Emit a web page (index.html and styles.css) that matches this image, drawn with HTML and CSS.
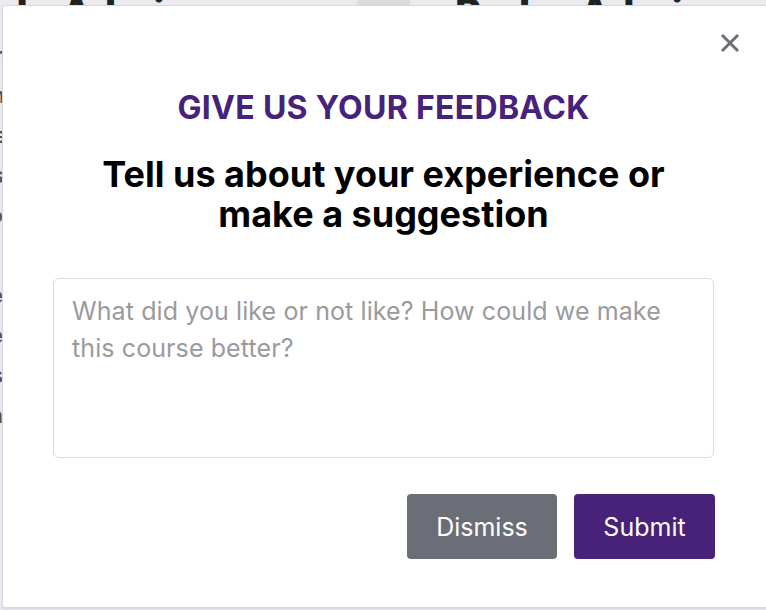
FILE: index.html
```html
<!DOCTYPE html>
<html lang="en">
<head>
<meta charset="utf-8">
<title>Feedback</title>
<link rel="stylesheet" href="styles.css">
</head>
<body>
<div class="page">
  <div class="bg-head">
    <h2 class="bg-name bg-name-left">Fernando Admin</h2>
    <div class="bg-chip"></div>
    <h2 class="bg-name bg-name-right">Pedro Admin</h2>
  </div>
  <div class="bg-lines">
    <p>Lorem ipsum</p>
    <p>Trainee</p>
    <p>Course</p>
    <p>Info</p>
    <p>&nbsp;</p>
    <p>Zone</p>
    <p>Mode</p>
    <p>Class</p>
    <p>Main</p>
  </div>
</div>

<div class="modal" role="dialog" aria-labelledby="fb-title">
  <button class="close" aria-label="Close">
    <svg viewBox="0 0 20 20" width="20" height="20"><path d="M2 2 L18 18 M18 2 L2 18" stroke="currentColor" stroke-width="3" fill="none"/></svg>
  </button>
  <div class="modal-body">
    <h1 class="eyebrow" id="fb-title">GIVE US YOUR FEEDBACK</h1>
    <h2 class="headline">Tell us about your experience or<br>make a suggestion</h2>
    <textarea class="field" placeholder="What did you like or not like? How could we make this course better?"></textarea>
    <div class="actions">
      <button class="btn btn-dismiss">Dismiss</button>
      <button class="btn btn-submit">Submit</button>
    </div>
  </div>
</div>
</body>
</html>
```

FILE: styles.css
```css
* { box-sizing: border-box; }

html, body {
  margin: 0;
  padding: 0;
  height: 100%;
  overflow: hidden;
}

body {
  background: #eaeaef;
  font-family: Inter, "Liberation Sans", sans-serif;
  position: relative;
}

.page {
  height: 100%;
}

.bg-head {
  display: flex;
  align-items: flex-end;
  height: 5px;
  overflow: hidden;
}

.bg-name {
  margin: 0;
  font-size: 40px;
  font-weight: 800;
  line-height: 1;
  color: #222;
  white-space: nowrap;
  flex: none;
  transform: translateY(28px);
  overflow: hidden;
}

.bg-name-left {
  margin-left: -140px;
  width: 330px;
  text-align: right;
}

.bg-chip {
  width: 53px;
  height: 5px;
  background: #dcdce0;
  margin-left: 167px;
  margin-right: 45px;
  align-self: flex-start;
}

.bg-name-right {
  width: 250px;
}

.bg-lines {
  margin-left: -60px;
  padding-top: 30px;
  font-size: 22px;
  font-weight: 600;
  color: #555;
  width: 63px;
  text-align: right;
}

.bg-lines p {
  margin: 0;
  line-height: 40px;
}

.modal {
  position: absolute;
  left: 2px;
  top: 5px;
  width: 770px;
  height: 603px;
  background: #ffffff;
  border: 1px solid #d9d8e2;
  border-radius: 3px;
  box-shadow: 0 1px 2px rgba(60, 60, 90, 0.12);
}

.close {
  position: absolute;
  top: 27px;
  right: 31px;
  width: 20px;
  height: 20px;
  padding: 0;
  border: 0;
  background: none;
  color: #6b6e76;
  cursor: pointer;
}

.close svg { display: block; }

.modal-body {
  padding: 84px 0 0 50px;
  display: flex;
  flex-direction: column;
  align-items: center;
  width: 711px;
}

.eyebrow {
  margin: 0;
  font-size: 32px;
  line-height: 36px;
  font-weight: 700;
  color: #46227a;
  letter-spacing: 0.3px;
  white-space: nowrap;
}

.headline {
  margin: 28px -40px 0;
  font-size: 36px;
  line-height: 40px;
  font-weight: 700;
  color: #000;
  text-align: center;
  white-space: nowrap;
}

.field {
  margin-top: 44px;
  width: 100%;
  height: 180px;
  border: 1px solid #dadbe0;
  border-radius: 6px;
  padding: 14px 18px;
  font-family: Inter, "Liberation Sans", sans-serif;
  font-size: 25px;
  letter-spacing: 0.1px;
  line-height: 37px;
  color: #333;
  resize: none;
  outline: none;
}

.field::placeholder {
  color: #9a9a9e;
}

.actions {
  align-self: stretch;
  display: flex;
  justify-content: flex-end;
  gap: 17px;
  margin: 36px -1px 0 0;
}

.btn {
  height: 65px;
  border: 0;
  border-radius: 4px;
  font-family: Inter, "Liberation Sans", sans-serif;
  font-size: 25px;
  color: #fff;
  padding: 0;
  cursor: pointer;
}

.btn-dismiss { background: #6b6e76; width: 150px; }
.btn-submit { background: #472278; width: 141px; }
```
